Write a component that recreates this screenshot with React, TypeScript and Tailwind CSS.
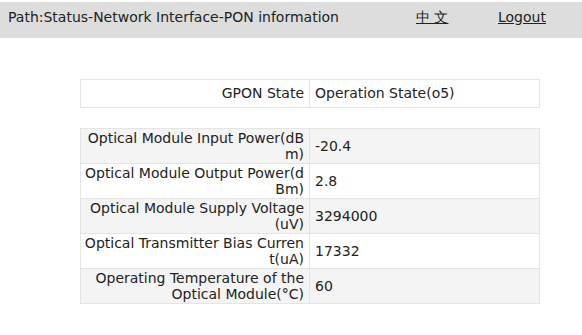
export default function App() {
  const rows = [
    ["Optical Module Input Power(dBm)", "-20.4"],
    ["Optical Module Output Power(dBm)", "2.8"],
    ["Optical Module Supply Voltage(uV)", "3294000"],
    ["Optical Transmitter Bias Current(uA)", "17332"],
    ["Operating Temperature of the Optical Module(°C)", "60"],
  ];
  return (
    <div className="w-[582px] h-[335px] bg-white text-[14px] text-[#222] font-['DejaVu_Sans',sans-serif]">
      <div className="mt-[2px] h-[36px] bg-[#dddddd] flex items-start pt-[5px] pl-[8px]">
        <span className="w-[408px]">Path:Status-Network Interface-PON information</span>
        <a className="underline w-[82px]">中 文</a>
        <a className="underline">Logout</a>
      </div>
      <div className="pl-[80px] pt-[41px]">
        <table className="w-[460px] border-collapse table-fixed">
          <tbody>
            <tr className="h-[28px]">
              <td className="w-[229px] border border-[#e4e4e4] text-right pr-[5px]">GPON State</td>
              <td className="border border-[#e4e4e4] pl-[5px]">Operation State(o5)</td>
            </tr>
          </tbody>
        </table>
        <table className="w-[460px] border-collapse table-fixed mt-[20px]">
          <tbody>
            {rows.map((r, i) => (
              <tr key={i} className={i % 2 === 0 ? "bg-[#f4f4f4] h-[35px]" : "bg-white h-[35px]"}>
                <td className="w-[229px] border border-[#e4e4e4] text-right pr-[5px] leading-[16px] break-all">{r[0]}</td>
                <td className="border border-[#e4e4e4] pl-[5px]">{r[1]}</td>
              </tr>
            ))}
          </tbody>
        </table>
      </div>
    </div>
  );
}
